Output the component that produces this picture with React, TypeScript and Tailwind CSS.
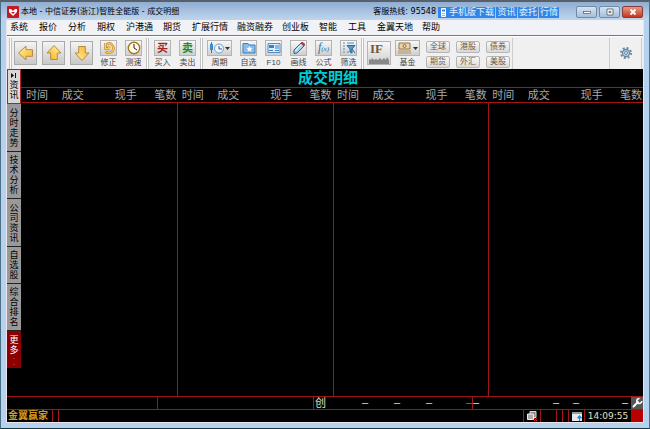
import { ReactNode } from 'react'

const menus = [
  { label: '系统', w: 'w-[29px]' },
  { label: '报价', w: 'w-[29px]' },
  { label: '分析', w: 'w-[29px]' },
  { label: '期权', w: 'w-[29px]' },
  { label: '沪港通', w: 'w-[37px]' },
  { label: '期货', w: 'w-[29px]' },
  { label: '扩展行情', w: 'w-[45px]' },
  { label: '融资融券', w: 'w-[45px]' },
  { label: '创业板', w: 'w-[37px]' },
  { label: '智能', w: 'w-[29px]' },
  { label: '工具', w: 'w-[29px]' },
  { label: '金翼天地', w: 'w-[45px]' },
  { label: '帮助', w: 'w-[29px]' },
]

const sideTabs = [
  { label: '分时走势', h: 'h-12' },
  { label: '技术分析', h: 'h-[47px]' },
  { label: '公司资讯', h: 'h-12' },
  { label: '自选股', h: 'h-[37px]' },
  { label: '综合排名', h: 'h-[47px]' },
]

const markets = ['全球', '港股', '债券', '期货', '外汇', '美股']
const columns = [0, 1, 2, 3]

function Arrow({ turn, label }: { turn: string; label: string }) {
  return (
    <button aria-label={label} className="flex h-6 w-[23px] items-center justify-center border border-[#aaa] bg-linear-to-b from-[#f4f4f4] to-[#c8c8c8]">
      <svg viewBox="0 0 18 18" className={`h-[18px] w-[18px] ${turn}`}>
        <defs>
          <linearGradient id="gold" x1="0" y1="0" x2="1" y2="1">
            <stop offset="0" stopColor="#fff5a8" />
            <stop offset="1" stopColor="#f9ae22" />
          </linearGradient>
        </defs>
        <path d="M1.500 9 9 2v3.700h6.500v6.600H9V16Z" fill="url(#gold)" stroke="#b98a3c" strokeLinejoin="round" />
      </svg>
    </button>
  )
}

function Tool({ label, children, wide }: { label: string; children: ReactNode; wide?: boolean }) {
  return (
    <button className="flex flex-col items-center">
      <span className={`flex h-4 items-center justify-center border border-[#b4b4b4] bg-linear-to-b from-[#f8f8f8] to-[#cfcfcf] ${wide ? 'w-[25px]' : 'w-[17px]'}`}>
        {children}
      </span>
      <span className="mt-0.5 h-2.5 text-[8px] leading-[10px] text-[#444]">{label}</span>
    </button>
  )
}

function Grip() {
  return <div className="h-[31px] w-[3px] shrink-0 border-x border-[#c2c2c2] bg-white" />
}

function Caret() {
  return <path d="M17 6h5l-2.500 3Z" fill="#333" />
}

export default function App() {
  return (
    <div className="flex min-h-screen flex-col border border-t-2 border-x-[#4d6f86] border-t-[#56616b] border-b-[#183642] bg-[#b4d2ee] px-[5px] pb-[5px] font-['Liberation_Sans','Noto_Sans_CJK_SC',sans-serif] text-black">
      <header className="-mx-[5px] flex h-[18px] items-end bg-linear-to-b from-[#90aed2] to-[#c0d5ed] px-1.5 pb-0.5">
        <svg viewBox="0 0 12 12" className="h-3 w-3 shrink-0">
          <rect width="12" height="12" rx="1" fill="#c41822" />
          <path d="M2 3h2l2 2 2-2h2v3L6 10 2 6Z" fill="#fff" />
          <path d="M4 6h4L6 8Z" fill="#c41822" />
        </svg>
        <h1 className="ml-0.5 flex-1 whitespace-nowrap font-['DejaVu_Sans','Noto_Sans_CJK_SC',sans-serif] text-[8px] leading-3">本地 - 中信证券(浙江)智胜全能版 - 成交明细</h1>
        <span className="mr-0.5 whitespace-nowrap font-['DejaVu_Sans','Noto_Sans_CJK_SC',sans-serif] text-[8px] leading-3">客服热线: 95548</span>
        <nav className="flex gap-px whitespace-nowrap text-[9px] leading-[11px] text-[#e3f3ff]">
          <a href="#mobile" className="flex w-[57px] items-center bg-[#2f86e8] pl-0.5">
            <svg viewBox="0 0 7 9" className="mr-0.5 h-[9px] w-[7px]">
              <rect x="1" width="5" height="9" rx="1" fill="#fff" />
              <path d="M2 1.500h3v2H2Z" fill="#2f86e8" />
              <path d="M2 5.500h3M2 7.500h3" stroke="#2f86e8" strokeWidth=".6" />
            </svg>
            手机版下载
          </a>
          <a href="#news" className="w-[21px] bg-[#2f86e8] text-center">资讯</a>
          <a href="#trade" className="w-5 bg-[#2f86e8] text-center">委托</a>
          <a href="#quotes" className="w-5 bg-[#2f86e8] text-center">行情</a>
        </nav>
        <div className="ml-[17px] flex gap-0.5">
          <button aria-label="最小化" className="flex h-3 w-[21px] items-center justify-center rounded-[2px] border border-[#7489a2] bg-linear-to-b from-[#d5e3f2] to-[#a7bfda]">
            <svg viewBox="0 0 10 8" className="h-2 w-2.5"><rect x="1.500" y="3.500" width="7" height="2" fill="#fff" stroke="#4b5967" strokeWidth=".7" /></svg>
          </button>
          <button aria-label="最大化" className="flex h-3 w-[21px] items-center justify-center rounded-[2px] border border-[#7489a2] bg-linear-to-b from-[#d5e3f2] to-[#a7bfda]">
            <svg viewBox="0 0 10 8" className="h-2 w-2.5"><path d="M2 1h6v6H2ZM4 3.300h2v1.400H4Z" fill="#fff" stroke="#4b5967" strokeWidth=".8" /></svg>
          </button>
          <button aria-label="关闭" className="flex h-3 w-[21px] items-center justify-center rounded-[2px] border border-[#8b3b35] bg-linear-to-b from-[#e59785] to-[#c43422]">
            <svg viewBox="0 0 10 8" className="h-2 w-2.5"><path d="m2.500 1.500 5 5m0-5-5 5" stroke="#fff" strokeWidth="1.800" /></svg>
          </button>
        </div>
      </header>

      <div className="flex flex-1 flex-col border-x border-b border-[#eee4ec]">
        <nav className="flex h-4 items-center border-b border-[#777] bg-[#f1f2f5] pl-[3px] text-[9px] whitespace-nowrap">
          {menus.map((m) => (
            <button key={m.label} className={`shrink-0 text-left ${m.w}`}>{m.label}</button>
          ))}
        </nav>

        <div className="flex h-[33px] items-center border-t border-white bg-[#f0f0f0] pl-0.5">
          <Grip />
          <div className="ml-0.5 flex gap-[5px]">
            <Arrow turn="rotate-0" label="后退" />
            <Arrow turn="rotate-90" label="向上" />
            <Arrow turn="-rotate-90" label="向下" />
          </div>
          <div className="mr-1 ml-[7px] flex gap-2 self-end pb-px">
            <Tool label="修正">
              <svg viewBox="0 0 14 14" className="h-3.5 w-3.5"><path d="M3.500 2v5.500H8M8 7.500 5.500 5M5 2.800a4.600 4.600 0 1 1-1.500 7.500" fill="none" stroke="#c08428" strokeWidth="2.400" /><path d="M3.500 2v5.500H8M8 7.500 5.500 5M5 2.800a4.600 4.600 0 1 1-1.500 7.500" fill="none" stroke="#ffcf4d" strokeWidth="1.200" /></svg>
            </Tool>
            <Tool label="测速">
              <svg viewBox="0 0 14 14" className="h-3.5 w-3.5"><circle cx="7" cy="7" r="5.700" fill="#fffbe9" stroke="#a97520" strokeWidth="1.400" /><path d="M7 3v4l3 2" fill="none" stroke="#222" /></svg>
            </Tool>
          </div>
          <Grip />
          <div className="mr-1 ml-[5px] flex gap-2 self-end pb-px">
            <Tool label="买入"><b className="text-[11px] leading-[14px] text-[#a52020]">买</b></Tool>
            <Tool label="卖出"><b className="text-[11px] leading-[14px] text-[#16902a]">卖</b></Tool>
          </div>
          <Grip />
          <div className="mr-1 ml-1 flex gap-2 self-end pb-px">
            <Tool label="周期" wide>
              <svg viewBox="0 0 23 14" className="h-3.5 w-[23px]"><path d="M3.500 1v11" stroke="#3177b8" /><path d="M2 3h3v6H2Z" fill="#3d8bcc" /><circle cx="11" cy="7.500" r="4.500" fill="#edf6ff" stroke="#739dca" /><path d="M11 5v3h3" stroke="#315f91" fill="none" /><Caret /></svg>
            </Tool>
            <Tool label="自选">
              <svg viewBox="0 0 14 14" className="h-3.5 w-3.5"><path d="M1 2.500h5l1 1.500h6v8H1Z" fill="#86bdeb" stroke="#3e7fc2" /><path d="m7.500 5 1 2h2L9 8.500l.500 2.500-2-1.500-2 1.500.500-2.500L4.500 7h2Z" fill="#fff" /></svg>
            </Tool>
            <Tool label="F10">
              <svg viewBox="0 0 14 14" className="h-3.5 w-3.5"><path d="M1 2.500h12v9H1Z" fill="#dceeff" stroke="#518cc4" /><path d="M2 4h5v3H2Z" fill="#3c80be" /><path d="M8 5h4M8 7h4M2 9.500h4M8 9.500h4" stroke="#3c80be" /></svg>
            </Tool>
            <Tool label="画线">
              <svg viewBox="0 0 14 14" className="h-3.5 w-3.5"><path d="m2 9 7-7c2 0 3 1 3 3l-7 7-3 .500Z" fill="#a9d2ef" stroke="#335f8d" /><path d="m9 2 3 3 .500-2L11 1.500Z" fill="#d63030" stroke="#b33" /><path d="m3.500 9.500 5-5" stroke="#fff" /></svg>
            </Tool>
            <Tool label="公式">
              <span className="font-['Liberation_Serif',serif] text-[12px] leading-[14px] text-[#2576a8] italic">f<small className="text-[7px]">(x)</small></span>
            </Tool>
            <Tool label="筛选">
              <svg viewBox="0 0 14 14" className="h-3.5 w-3.5"><path d="M1 2h2M5 2h7M1 5h2M1 8h2M1 11h2M5 11h2" stroke="#518abd" /><path d="M5 4.500h8L10 8v4l-2-1V8Z" fill="#4e9fcc" stroke="#286b9d" /><path d="m10 8 3 4" stroke="#286b9d" /></svg>
            </Tool>
          </div>
          <Grip />
          <button className="ml-[3px] flex h-6 w-6 flex-col items-start border border-[#b4b4b4] bg-linear-to-b from-[#f8f8f8] to-[#d0d0d0]">
            <b className="h-3 pl-0.5 font-['Liberation_Serif',serif] text-[13px] leading-[14px] text-[#72583c]">IF</b>
            <svg viewBox="0 0 22 10" className="h-2.5 w-[22px]"><path d="M1 10V5l2 1 1-2 2 2 2-1 2 1 2-2 2 2 2-2 2 2 1-3 2 3v4Z" fill="#888" /></svg>
          </button>
          <div className="ml-1 self-end pb-px">
            <Tool label="基金" wide>
              <svg viewBox="0 0 23 14" className="h-3.5 w-[23px]"><path d="M3 2h11v6H3Z" fill="#e9d5ad" stroke="#997644" /><circle cx="8.500" cy="5" r="1.500" fill="none" stroke="#997644" /><path d="M2 10h13M2 12h13" stroke="#b59158" /><Caret /></svg>
            </Tool>
          </div>
          <div className="ml-1.5 grid grid-cols-3 gap-x-1.5 gap-y-[3px] self-end pb-px">
            {markets.map((m) => (
              <button key={m} className="h-3 w-6 rounded-[2px] border border-[#b5b5b5] bg-linear-to-b from-[#f8f8f8] to-[#d8d8d8] text-[8px] leading-[10px] text-[#76583d]">{m}</button>
            ))}
          </div>
          <div className="ml-0.5 h-[31px] w-px bg-[#ccc]" />
          <button aria-label="设置" className="mr-px ml-auto flex h-[31px] w-[33px] items-center justify-center border-x border-[#ccc]">
            <svg viewBox="0 0 14 14" className="h-3.5 w-3.5"><circle cx="7" cy="7" r="5" fill="none" stroke="#6d8ba4" strokeWidth="2" strokeDasharray="2 1.927" /><circle cx="7" cy="7" r="3.500" fill="#c3d8e8" stroke="#6787a2" strokeWidth="1.300" /><circle cx="7" cy="7" r="1.500" fill="#f0f0f0" stroke="#6787a2" /></svg>
          </button>
        </div>

        <div className="flex flex-1 bg-black">
          <aside className="flex w-[14px] shrink-0 flex-col text-[9px] leading-[10px]">
            <button className="flex h-[35px] flex-col items-center justify-center border border-[#b22222] bg-[#d8d8d8]">
              <svg viewBox="0 0 6 5" className="mb-0.5 h-[5px] w-1.5"><path d="M0 0v5l3-2.500ZM4 0h1v5H4Z" fill="#111" /></svg>
              <span className="w-[9px]">资讯</span>
            </button>
            {sideTabs.map((tab) => (
              <button key={tab.label} className={`flex items-center justify-center border-b border-[#222] bg-[#999] ${tab.h}`}>
                <span className="w-[9px]">{tab.label}</span>
              </button>
            ))}
            <button className="flex h-[37px] flex-col items-center bg-[#8b0000] pt-1 text-white">
              <span className="w-[9px]">更多</span>
              <span className="text-[5px] leading-[6px]">·</span>
              <span className="text-[5px] leading-[6px]">·</span>
            </button>
          </aside>
          <main className="flex flex-1 flex-col text-[#aaa]">
            <h2 className="h-[18px] pr-2 text-center text-[15px] leading-[18px] font-bold text-[#00ccd6]">成交明细</h2>
            <div className="grid flex-1 grid-cols-4 border-t border-[#a01515] pl-px">
              {columns.map((c) => (
                <table key={c} className="h-full w-full table-fixed text-[11px] leading-[14px]">
                  <thead>
                    <tr className="h-[14px] border-b border-[#a01515]">
                      <th className="w-[23%] p-0 pl-1 text-left font-normal">时间</th>
                      <th className="w-[24%] p-0 pl-1 text-left font-normal">成交</th>
                      <th className="w-[27%] p-0 text-right font-normal">现手</th>
                      <th className="w-[26%] p-0 pr-px text-right font-normal">笔数</th>
                    </tr>
                  </thead>
                  <tbody>
                    <tr><td colSpan={4} className={c > 0 ? 'border-l border-[#a01515]' : ''} /></tr>
                  </tbody>
                </table>
              ))}
            </div>
          </main>
        </div>

        <footer className="bg-black text-[#e0e0c0]">
          <div className="flex h-[14px] border-y border-[#a01515] text-[11px] leading-[10px]">
            <div className="w-[151px] border-r border-[#a01515]" />
            <div className="w-[156px] border-r border-[#a01515]" />
            <div className="flex flex-1 pl-px">
              <span className="w-[47px] leading-3">创</span>
              <span className="w-8">–</span>
              <span className="w-8">–</span>
              <span className="w-10">–</span>
              <span className="w-[7px] border-r border-[#a01515] text-[#19a090]">–</span>
              <span className="w-20">–</span>
              <span className="w-5">–</span>
              <span className="w-[49px]">–</span>
              <span>–</span>
            </div>
            <button aria-label="工具设置" className="flex w-3 items-center justify-center bg-[#555]">
              <svg viewBox="0 0 12 12" className="h-3 w-3"><path d="M2.500 9.500 7 5" stroke="#fff" strokeWidth="2" strokeLinecap="round" /><path d="M8.500 1.500A2.500 2.500 0 1 0 10.800 4" fill="none" stroke="#fff" strokeWidth="1.600" /></svg>
            </button>
          </div>
          <div className="flex h-3 items-center text-[10px] leading-3">
            <div className="h-3 w-[45px] pl-px font-bold text-[#d99a1a]">金翼赢家</div>
            <div className="h-3 w-[7px] border-x border-[#a01515]" />
            <div className="flex-1" />
            <div className="flex h-3 w-[18px] items-center justify-center border-x border-[#a01515]">
              <svg viewBox="0 0 12 12" className="h-3 w-3"><path d="M4 1.500h6v6H4Z" fill="#888" stroke="#ddd" /><path d="M1.500 4h6v5.500h-6Z" fill="#aaa" stroke="#eee" /><path d="m8 8 3 3m0-3-3 3" stroke="#c22" /></svg>
            </div>
            <div className="h-3 w-4 border-r border-[#a01515]" />
            <div className="h-3 w-1.5 border-r border-[#a01515]" />
            <div className="h-3 w-1.5 border-r border-[#a01515]" />
            <div className="flex h-3 w-4 items-center justify-center border-r border-[#a01515]">
              <svg viewBox="0 0 12 12" className="h-3 w-3"><path d="M1 2h10v9H1Z" fill="#e8e8e8" /><path d="M1 2h10v2H1Z" fill="#999" /><path d="M8.500 11V7M6.500 8l2-2.500 2 2.500Z" fill="#2686d8" stroke="#2686d8" /></svg>
            </div>
            <time className="w-[46px] text-center font-['DejaVu_Sans',sans-serif] text-[9px]">14:09:55</time>
            <div className="h-3 w-3 bg-[#b80000]" />
          </div>
        </footer>
      </div>
    </div>
  )
}
